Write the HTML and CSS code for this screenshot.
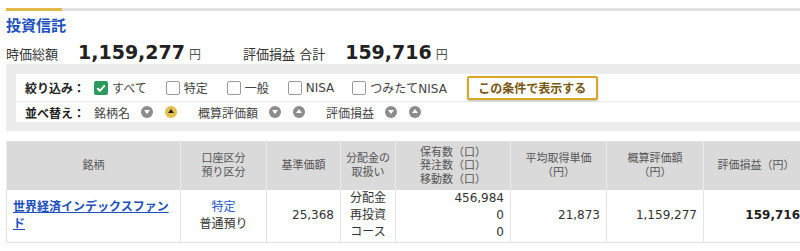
FILE: index.html
```html
<!DOCTYPE html>
<html lang="ja">
<head>
    <meta charset="UTF-8">
    <title>投資信託</title>
    <link rel="stylesheet" href="styles.css">
</head>
<body>
    <div class="page">
        <div class="tabbar"><span class="tabbar-on"></span></div>
        <h2 class="title">投資信託</h2>

        <div class="summary">
            <span class="sum-label">時価総額</span>
            <span class="sum-value">1,159,277</span>
            <span class="sum-unit">円</span>
            <span class="sum-label sum-label-2">評価損益 合計</span>
            <span class="sum-value">159,716</span>
            <span class="sum-unit">円</span>
        </div>

        <div class="panel">
            <div class="panel-box">
                <div class="filter-row">
                    <span class="row-label">絞り込み：</span>
                    <label class="check"><span class="box on"><svg viewBox="0 0 14 14" width="14" height="14"><path d="M3.2 7.2 L5.9 9.8 L10.8 4.4" fill="none" stroke="#fff" stroke-width="2"/></svg></span>すべて</label>
                    <label class="check"><span class="box"></span>特定</label>
                    <label class="check"><span class="box"></span>一般</label>
                    <label class="check"><span class="box"></span>NISA</label>
                    <label class="check"><span class="box"></span>つみたてNISA</label>
                    <button class="btn-apply">この条件で表示する</button>
                </div>
                <div class="sort-row">
                    <span class="row-label">並べ替え：</span>
                    <span class="sort-name">銘柄名</span>
                    <span class="sort-btn down"></span>
                    <span class="sort-btn up active"></span>
                    <span class="sort-name">概算評価額</span>
                    <span class="sort-btn down"></span>
                    <span class="sort-btn up"></span>
                    <span class="sort-name">評価損益</span>
                    <span class="sort-btn down"></span>
                    <span class="sort-btn up"></span>
                </div>
            </div>
        </div>

        <table class="fund-table">
            <colgroup>
                <col style="width:174px">
                <col style="width:86px">
                <col style="width:74px">
                <col style="width:55px">
                <col style="width:115px">
                <col style="width:96px">
                <col style="width:97px">
                <col style="width:105px">
            </colgroup>
            <thead>
                <tr>
                    <th>銘柄</th>
                    <th>口座区分<br>預り区分</th>
                    <th>基準価額</th>
                    <th>分配金の<br>取扱い</th>
                    <th>保有数（口）<br>発注数（口）<br>移動数（口）</th>
                    <th>平均取得単価<br>（円）</th>
                    <th>概算評価額<br>（円）</th>
                    <th>評価損益（円）</th>
                </tr>
            </thead>
            <tbody>
                <tr>
                    <td class="name"><a href="#">世界経済インデックスファンド</a></td>
                    <td class="center"><span class="blue">特定</span><br>普通預り</td>
                    <td class="num">25,368</td>
                    <td class="center">分配金<br>再投資<br>コース</td>
                    <td class="num">456,984<br>0<br>0</td>
                    <td class="num">21,873</td>
                    <td class="num">1,159,277</td>
                    <td class="num bold">159,716</td>
                </tr>
            </tbody>
        </table>
    </div>
</body>
</html>
```

FILE: styles.css
```css
*{
    margin: 0;
    padding: 0;
    box-sizing: border-box;
}
html,body{
    overflow: hidden;
}
body{
    font-family: "DejaVu Sans", "Noto Sans CJK JP", sans-serif;
    color: #333;
    font-size: 12px;
    background: #fff;
}
.page{
    padding: 8px 0 0 6px;
    width: 820px;
}
.tabbar{
    height: 3px;
    background-color: #e1e1e1;
    display: flex;
}
.tabbar-on{
    width: 56px;
    background-color: #e3b94a;
}
.title{
    margin-top: 5px;
    font-size: 15px;
    line-height: 20px;
    color: #1d50be;
    font-weight: bold;
}

/* 合計 */
.summary{
    display: flex;
    align-items: baseline;
    height: 28px;
    padding-top: 4px;
    line-height: 24px;
}
.sum-label{
    font-size: 13px;
    color: #333;
}
.sum-label-2{
    margin-left: 42px;
}
.sum-value{
    font-size: 19px;
    font-weight: bold;
    color: #222;
    margin-left: 20px;
}
.sum-unit{
    font-size: 12px;
    color: #555;
    margin-left: 4px;
}

/* 絞り込み */
.panel{
    background-color: #ececec;
    padding: 10px 0 9px 10px;
}
.panel-box{
    background-color: #fff;
}
.filter-row{
    height: 28px;
    border-bottom: 1px solid #ebebeb;
    display: flex;
    align-items: center;
    padding-left: 9px;
}
.sort-row{
    height: 20px;
    display: flex;
    align-items: center;
    padding-left: 9px;
}
.row-label{
    font-weight: bold;
    width: 69px;
    color: #222;
}
.check{
    display: flex;
    align-items: center;
    margin-right: 19px;
    color: #444;
}
.check:nth-child(5),
.check:nth-child(6){
    margin-right: 18px;
}
.box{
    width: 14px;
    height: 14px;
    border: 1px solid #9a9a9a;
    border-radius: 2px;
    margin-right: 4px;
    background: #fff;
    display: flex;
}
.box.on{
    border: none;
    background-color: #2b9a5c;
}
.btn-apply{
    margin-left: 2px;
    width: 131px;
    height: 24px;
    border: 2px solid #d8a726;
    border-radius: 2px;
    background: #fff;
    color: #76560d;
    font-weight: bold;
    font-size: 12px;
    font-family: "DejaVu Sans", "Noto Sans CJK JP", sans-serif;
    box-shadow: 0 1px 2px rgba(0,0,0,0.25);
}
.sort-name{
    color: #444;
    margin-right: 11px;
}
.sort-btn{
    width: 12px;
    height: 12px;
    border-radius: 50%;
    background-color: #8c8c8c;
    position: relative;
    margin-right: 12px;
}
.sort-btn + .sort-btn{
    margin-right: 21px;
}
.sort-btn::after{
    content: "";
    position: absolute;
    left: 3px;
    border-left: 3px solid transparent;
    border-right: 3px solid transparent;
}
.sort-btn.down::after{
    top: 4px;
    border-top: 4px solid #fff;
}
.sort-btn.up::after{
    top: 3px;
    border-bottom: 4px solid #fff;
}
.sort-btn.active{
    background-color: #e2bf4e;
}
.sort-btn.active::after{
    border-bottom-color: #222;
}

/* 一覧 */
.fund-table{
    margin-top: 10px;
    width: 802px;
    table-layout: fixed;
    border-collapse: collapse;
    border: 1px solid #e0e0e0;
}
.fund-table th{
    height: 48px;
    background-color: #dadada;
    font-weight: normal;
    font-size: 11px;
    line-height: 13.5px;
    color: #555;
    border-left: 1px solid #ececec;
    text-align: center;
    vertical-align: middle;
}
.fund-table td{
    height: 53px;
    line-height: 17px;
    border-left: 1px solid #e3e3e3;
    vertical-align: middle;
    padding: 0 6px;
}
.name a{
    color: #1d4fbf;
    font-weight: bold;
}
.center{
    text-align: center;
}
.blue{
    color: #2a5bc4;
}
.num{
    text-align: right;
    color: #333;
}
.fund-table td.bold{
    font-weight: bold;
    color: #222;
    padding-right: 8px;
}
```
